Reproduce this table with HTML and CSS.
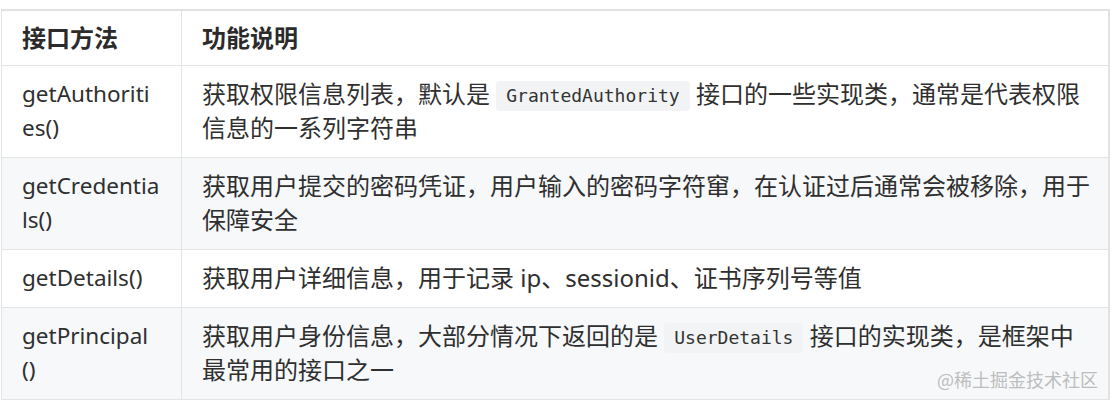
FILE: index.html
```html
<!DOCTYPE html>
<html lang="zh-CN">
<head>
<meta charset="utf-8">
<title>接口方法</title>
<link rel="stylesheet" href="styles.css">
</head>
<body>
<div class="wrap">
  <table class="api-table">
    <colgroup>
      <col class="col-method">
      <col class="col-desc">
    </colgroup>
    <thead>
      <tr>
        <th>接口方法</th>
        <th>功能说明</th>
      </tr>
    </thead>
    <tbody>
      <tr>
        <td class="method">getAuthoriti<br>es()</td>
        <td>获取权限信息列表，默认是 <code>GrantedAuthority</code> 接口的一些实现类，通常是代表权限信息的一系列字符串</td>
      </tr>
      <tr class="alt">
        <td class="method">getCredentia<br>ls()</td>
        <td>获取用户提交的密码凭证，用户输入的密码字符窜，在认证过后通常会被移除，用于保障安全</td>
      </tr>
      <tr>
        <td class="method">getDetails()</td>
        <td>获取用户详细信息，用于记录 ip、sessionid、证书序列号等值</td>
      </tr>
      <tr class="alt">
        <td class="method">getPrincipal<br>()</td>
        <td>获取用户身份信息，大部分情况下返回的是 <code>UserDetails</code> 接口的实现类，是框架中最常用的接口之一</td>
      </tr>
    </tbody>
  </table>
  <div class="watermark">@稀土掘金技术社区</div>
</div>
</body>
</html>
```
FILE: styles.css
```css
html, body {
  margin: 0;
  padding: 0;
  background: #ffffff;
}

.wrap {
  position: relative;
  padding: 9px 4px 0 1px;
}

.api-table {
  width: 1109px;
  table-layout: fixed;
  border-collapse: collapse;
  font-family: "Noto Sans", "Noto Sans CJK SC", sans-serif;
  font-size: 24px;
  line-height: 34px;
  color: #2f2f2f;
  border-top: 2px solid #e2e2e2;
  border-right: 2px solid #e2e2e2;
}

.col-method {
  width: 180px;
}

.api-table th,
.api-table td {
  border: 1px solid #e2e4e6;
  text-align: left;
  vertical-align: middle;
}

.api-table th {
  padding: 10px 15px 10px 20px;
  font-weight: 700;
  color: #2b2b2b;
}

.api-table td {
  padding: 11px 15px 12px 20px;
}

.api-table td.method {
  font-size: 22.5px;
}

.api-table tr.alt td {
  background: #f6f8fa;
}

.api-table code {
  display: inline-block;
  vertical-align: 1px;
  font-family: "DejaVu Sans Mono", "Liberation Mono", monospace;
  font-size: 18px;
  line-height: 22px;
  background: #f2f3f4;
  border-radius: 4px;
  padding: 4px 10px;
  color: #333333;
}

.watermark {
  position: absolute;
  right: 16px;
  top: 367px;
  font-family: "Noto Sans CJK SC", sans-serif;
  font-size: 18px;
  line-height: 24px;
  color: #bdbdbd;
}
```
